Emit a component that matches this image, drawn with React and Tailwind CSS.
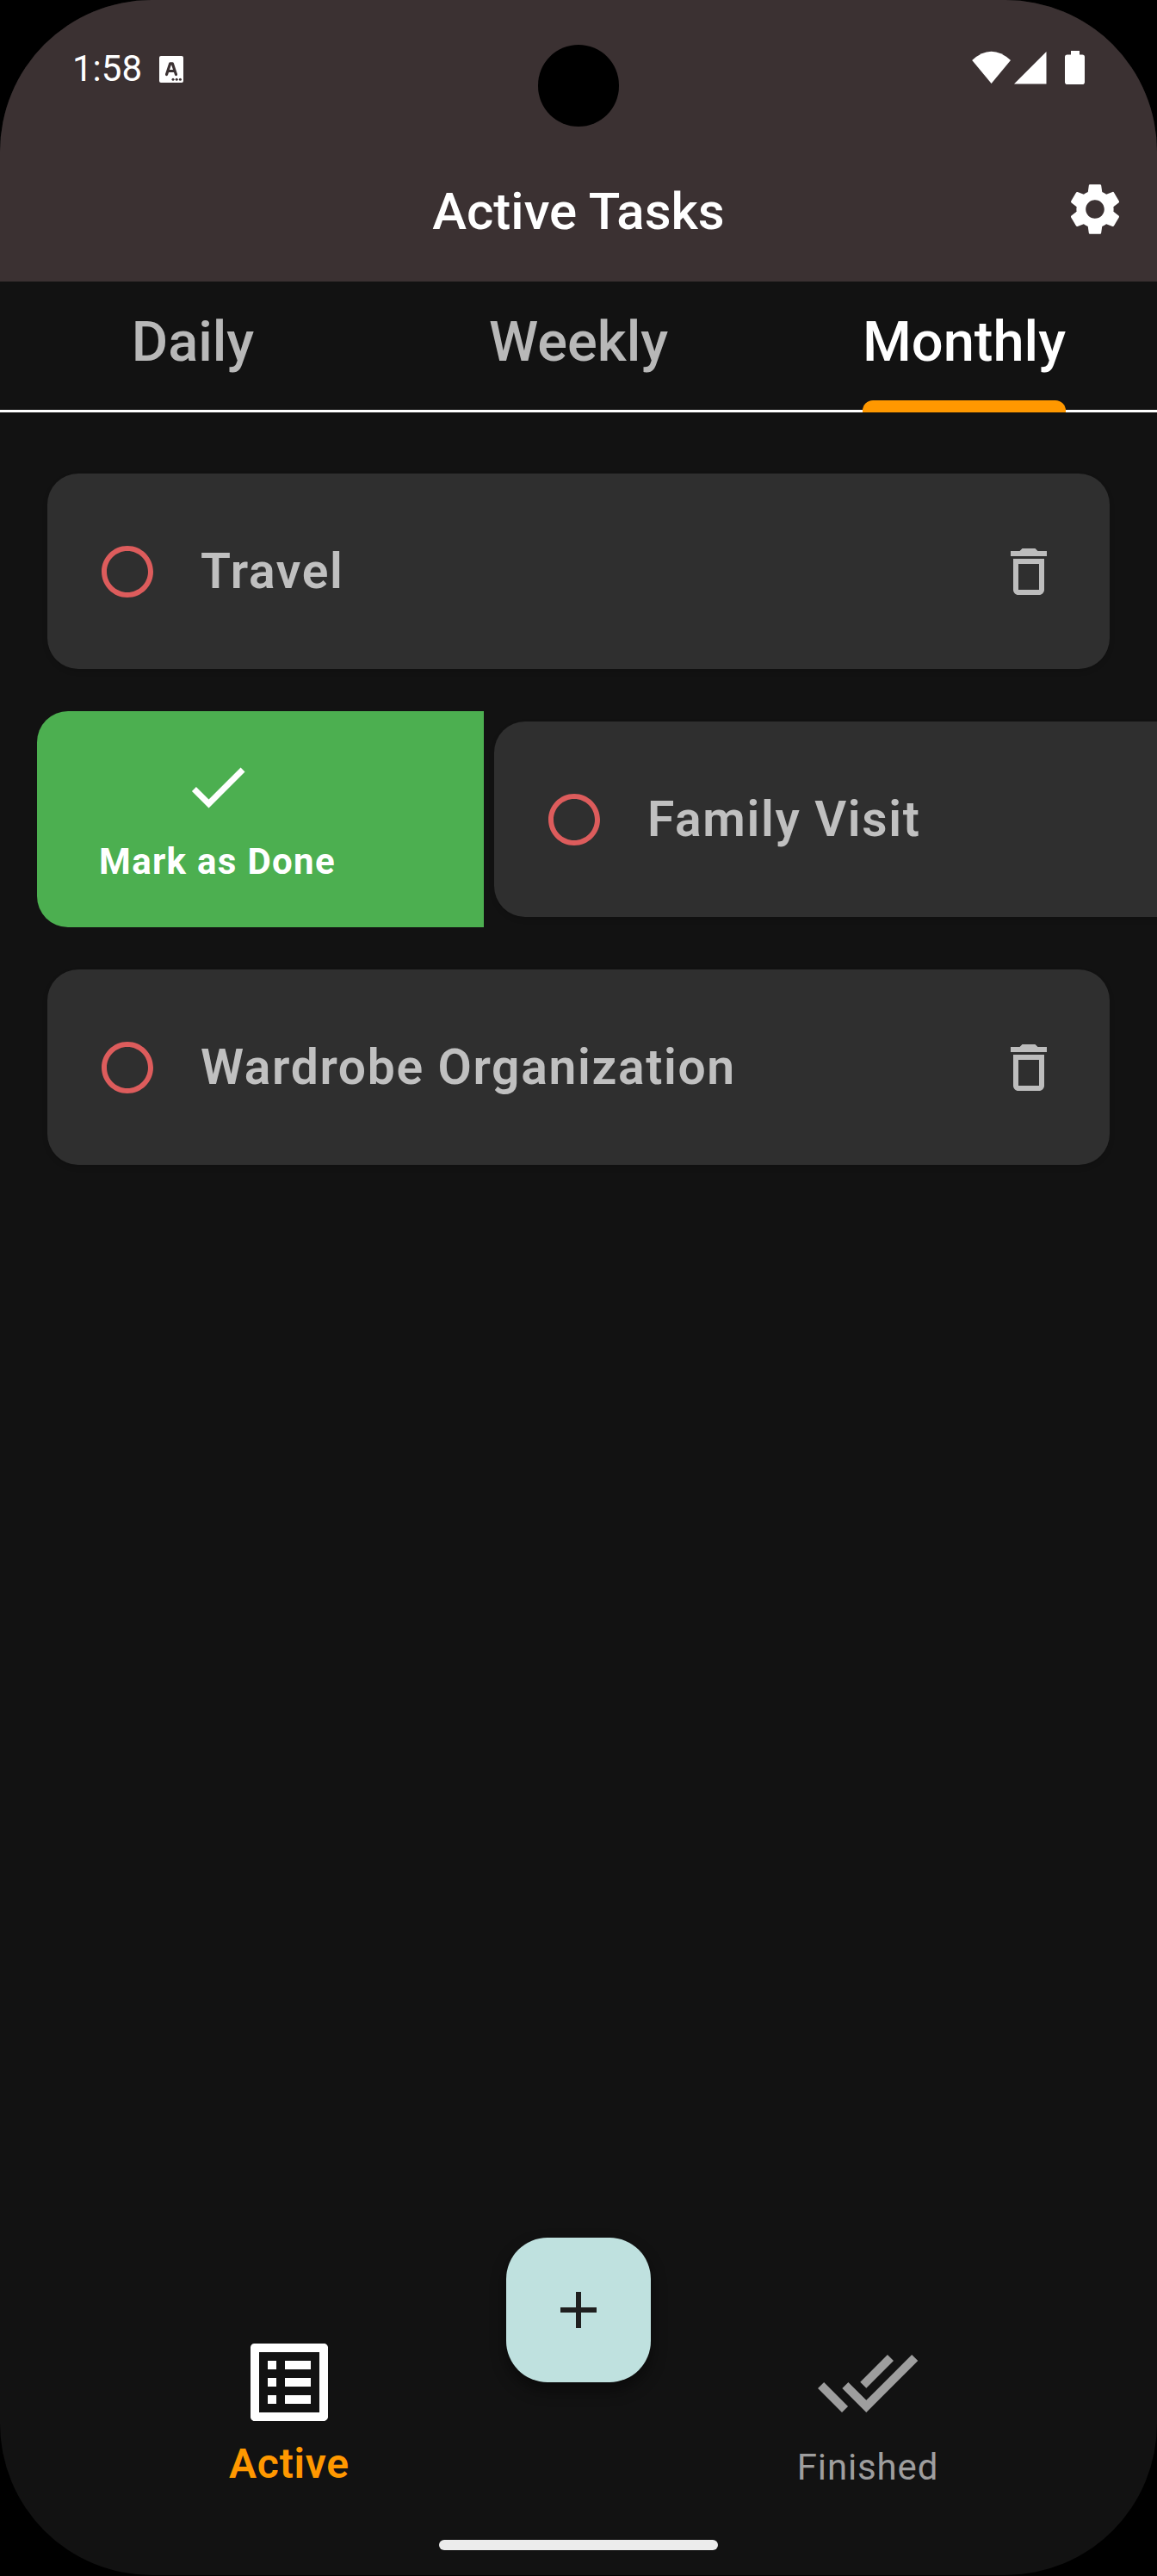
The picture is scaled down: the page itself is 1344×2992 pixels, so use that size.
import { MdSettings, MdDeleteOutline, MdCheck, MdAdd, MdListAlt, MdDoneAll, MdRadioButtonUnchecked } from "react-icons/md";

function StatusBar() {
  return (
    <div className="flex h-[160px] items-start justify-between pl-[84px] pr-[82px] pt-[54px] text-white">
      <div className="flex items-center gap-[20px]">
        <span className="text-[42px] leading-[52px]">1:58</span>
        <svg className="h-[31px] w-[28px]" viewBox="0 0 28 31">
          <rect width="28" height="31" rx="2" fill="white" />
          <path d="M8.500 21.500 L12.700 8.800 H15.300 L19.500 21.500 M10.500 17.500 H17.500" fill="none" stroke="#3b3132" strokeWidth="3.200" strokeLinecap="round" strokeLinejoin="round" />
          <circle cx="16" cy="27.200" r="1.500" fill="#3b3132" />
          <circle cx="20.200" cy="27.200" r="1.500" fill="#3b3132" />
          <circle cx="24.400" cy="27.200" r="1.500" fill="#3b3132" />
        </svg>
      </div>
      <svg className="mt-[5px] h-[40px] w-[133px]" viewBox="0 0 133 40" fill="white">
        <path d="M0.200 11 Q22.500 -9.500 45 11 L22.600 38 Z" />
        <path d="M49 38.500 L86.500 1 V38.500 Z" />
        <path d="M115 0 h10 v4.500 h3.200 q2.800 0 2.800 2.800 v28.900 q0 2.800 -2.800 2.800 h-17.400 q-2.800 0 -2.800 -2.800 v-28.900 q0 -2.800 2.800 -2.800 h4.200 z" />
      </svg>
      <div className="absolute left-[625px] top-[52px] h-[95px] w-[94px] rounded-full bg-black" />
    </div>
  );
}

function Tab({ label, active }) {
  return (
    <div className={active ? "flex flex-1 flex-col items-center text-white" : "flex flex-1 flex-col items-center text-[#b8b8b8]"}>
      <div className="flex h-[152px] shrink-0 flex-col items-center justify-between">
        <span className="pt-[30px] text-[65px] font-medium leading-[80px]">{label}</span>
        {active && <div className="h-[14px] w-full rounded-t-[12px] bg-[#ff9800]" />}
      </div>
    </div>
  );
}

function TaskCard({ title }) {
  return (
    <div className="flex h-[227px] w-[1234px] shrink-0 items-center rounded-[36px] bg-[#2f2f2f] pl-[57px] pr-[58px] shadow-[0_3px_6px_rgba(0,0,0,0.12)]">
      <MdRadioButtonUnchecked className="size-[72px] shrink-0 text-[#dd5c5c]" />
      <span className="ml-[49px] flex-1 whitespace-nowrap text-[57px] font-semibold leading-[72px] tracking-[1.65px] text-[#c0c0c0]">{title}</span>
      <MdDeleteOutline className="size-[72px] shrink-0 text-[#bdbdbd]" />
    </div>
  );
}

export default function App() {
  return (
    <div className="h-[2992px] w-[1344px] overflow-hidden bg-black font-['Roboto',sans-serif]">
      <div className="relative flex h-[2991px] w-full flex-col overflow-hidden rounded-[176px] bg-[#121212]">
        <header className="h-[327px] shrink-0 bg-[#3b3132]">
          <StatusBar />
          <div className="grid grid-cols-[1fr_auto_1fr] items-start pt-[47px] text-white">
            <span />
            <h1 className="pt-[3px] text-[60px] font-medium leading-[72px]">Active Tasks</h1>
            <MdSettings className="mr-[36px] size-[72px] justify-self-end" />
          </div>
        </header>

        <nav className="flex h-[152px] shrink-0 border-b-[3px] border-white">
          <Tab label="Daily" />
          <Tab label="Weekly" />
          <Tab label="Monthly" active />
        </nav>

        <main className="flex grow flex-col pt-[71px]">
          <div className="pl-[55px]">
            <TaskCard title="Travel" />
          </div>
          <div className="my-[49px] flex items-center gap-[12px] pl-[43px]">
            <div className="flex h-[251px] w-[519px] shrink-0 flex-col rounded-l-[36px] bg-[#4caf50] pl-[73px] pt-[46px] text-white">
              <div className="flex w-[273px] flex-col items-center">
                <MdCheck className="size-[84px]" />
                <span className="mt-[19px] whitespace-nowrap text-[42px] font-bold leading-[52px] tracking-[1.3px]">Mark as Done</span>
              </div>
            </div>
            <TaskCard title="Family Visit" />
          </div>
          <div className="pl-[55px]">
            <TaskCard title="Wardrobe Organization" />
          </div>
        </main>

        <footer className="relative grid h-[392px] shrink-0 grid-cols-2">
          <div className="flex flex-col items-center pt-[108px]">
            <MdListAlt className="size-[120px] text-white" />
            <span className="mt-[5px] text-[48px] font-semibold leading-[60px] tracking-[0.8px] text-[#ff9800]">Active</span>
          </div>
          <div className="flex flex-col items-center pt-[108px]">
            <MdDoneAll className="size-[120px] text-[#9e9e9e]" />
            <span className="mt-[9px] text-[42px] leading-[60px] tracking-[0.87px] text-[#9e9e9e]">Finished</span>
          </div>
          <div className="absolute left-[588px] top-0 flex size-[168px] items-center justify-center rounded-[48px] bg-[#bfe1df] shadow-[0_9px_18px_rgba(0,0,0,0.45)]">
            <MdAdd className="size-[72px] text-[#1f1f1f]" />
          </div>
          <div className="absolute bottom-[29px] left-[510px] h-[12px] w-[324px] rounded-full bg-[#ececec]" />
        </footer>
      </div>
    </div>
  );
}
